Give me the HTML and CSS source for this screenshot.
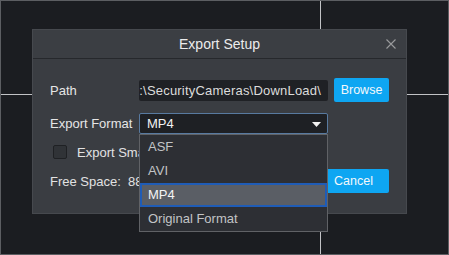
FILE: index.html
```html
<!DOCTYPE html>
<html>
<head>
<meta charset="utf-8">
<link rel="stylesheet" href="styles.css">
</head>
<body>
<div class="screen">
  <div class="cell"></div>
  <div class="cell"></div>
  <div class="cell"></div>
  <div class="cell"></div>

  <div class="dialog">
    <div class="titlebar">
      <span></span>
      <span class="title">Export Setup</span>
      <span class="close">
        <svg width="10" height="10" viewBox="0 0 10 10"><path d="M0.5 0.5 L9.5 9.5 M9.5 0.5 L0.5 9.5" stroke="#9a9b9d" stroke-width="1.1" fill="none"/></svg>
      </span>
    </div>
    <div class="body">
      <div class="row row-path">
        <span class="label">Path</span>
        <div class="input"><span class="input-text">D:\SecurityCameras\DownLoad\</span></div>
        <button class="btn btn-browse">Browse</button>
      </div>
      <div class="row row-format">
        <span class="label">Export Format</span>
        <div class="select-wrap">
          <div class="select">
            <span>MP4</span>
            <svg class="arrow" width="9" height="5" viewBox="0 0 9 5"><path d="M0 0 L9 0 L4.5 5 Z" fill="#f2f2f2"/></svg>
          </div>
          <ul class="list">
            <li class="item">ASF</li>
            <li class="item">AVI</li>
            <li class="item item-sel">MP4</li>
            <li class="item">Original Format</li>
          </ul>
        </div>
      </div>
      <div class="row row-check">
        <span class="checkbox"></span>
        <span class="check-label">Export Smart Search Record</span>
      </div>
      <div class="row row-free">
        <span class="free">Free Space:&nbsp; 88.52GB</span>
        <div class="actions">
          <button class="btn btn-wide">OK</button>
          <button class="btn btn-wide">Cancel</button>
        </div>
      </div>
    </div>
  </div>
</div>
</body>
</html>
```

FILE: styles.css
```css
* { box-sizing: border-box; }
html, body { margin: 0; padding: 0; background: #1b1d21; }
body { font-family: "Liberation Sans", Arial, sans-serif; font-size: 13px; color: #e4e4e4; }

.screen {
  position: relative;
  width: 449px;
  height: 255px;
  border: 1px solid #5c5e62;
  background: #c2c3c6;
  display: grid;
  grid-template-columns: 319px 1fr;
  grid-template-rows: 93px 1fr;
  gap: 1px;
  overflow: hidden;
}
.cell { background: #1b1d21; }

.dialog {
  position: absolute;
  left: 31px;
  top: 28px;
  width: 375px;
  height: 185px;
  background: #3a3d42;
  border: 1px solid #46494e;
  display: flex;
  flex-direction: column;
}

.titlebar {
  height: 29px;
  border-bottom: 1px solid #26282c;
  background: #3b3e43;
  display: grid;
  grid-template-columns: 1fr auto 1fr;
  align-items: center;
}
.title { font-size: 14px; color: #ececec; }
.close { justify-self: end; padding-right: 10px; display: flex; }

.body {
  padding: 19px 17px 0 17px;
  display: flex;
  flex-direction: column;
}
.row { display: flex; align-items: center; }
.label { width: 89px; flex-shrink: 0; color: #e6e6e6; }

.row-path { height: 24px; }
.input {
  width: 189px;
  height: 21px;
  background: #1f2125;
  border-radius: 2px;
  display: flex;
  justify-content: flex-end;
  align-items: center;
  overflow: hidden;
  padding-right: 7px;
}
.input-text { white-space: nowrap; flex-shrink: 0; color: #dcdcdc; letter-spacing: 0.2px; }

.btn {
  font-family: "Liberation Sans", Arial, sans-serif;
  font-size: 12.5px;
  color: #f4f8fb;
  background: #0ea6f2;
  border: none;
  border-radius: 2px;
  height: 24px;
  padding: 0;
}
.btn-browse { width: 55px; margin-left: 6px; }

.row-format { height: 21px; margin-top: 11px; }
.select-wrap { position: relative; width: 189px; height: 21px; }
.select {
  height: 21px;
  border: 1px solid #587aa0;
  border-radius: 2px;
  background: #1e2024;
  display: flex;
  align-items: center;
  justify-content: space-between;
  padding: 0 6px 0 7px;
  color: #f2f2f2;
}
.arrow { margin-top: 1px; }

.list {
  position: absolute;
  left: 0;
  top: 21px;
  width: 189px;
  margin: 0;
  padding: 0;
  list-style: none;
  background: #2d2f34;
  border: 1px solid #606266;
  z-index: 2;
}
.item {
  height: 24px;
  line-height: 24px;
  padding-left: 8px;
  color: #c2c4c6;
}
.item-sel {
  background: #5a5e65;
  border: 2px solid #1f5cb6;
  line-height: 20px;
  padding-left: 6px;
  color: #f4f4f4;
}

.row-check { height: 24px; margin-top: 6px; }
.checkbox {
  width: 14px;
  height: 14px;
  margin-left: 3px;
  border: 1px solid #1f2124;
  border-radius: 2px;
  background: #303337;
}
.check-label { margin-left: 10px; white-space: nowrap; color: #e2e2e2; }

.row-free { height: 24px; margin-top: 5px; justify-content: space-between; }
.free { color: #e2e2e2; white-space: nowrap; }
.actions { display: flex; gap: 6px; }
.btn-wide { width: 71px; }
```
